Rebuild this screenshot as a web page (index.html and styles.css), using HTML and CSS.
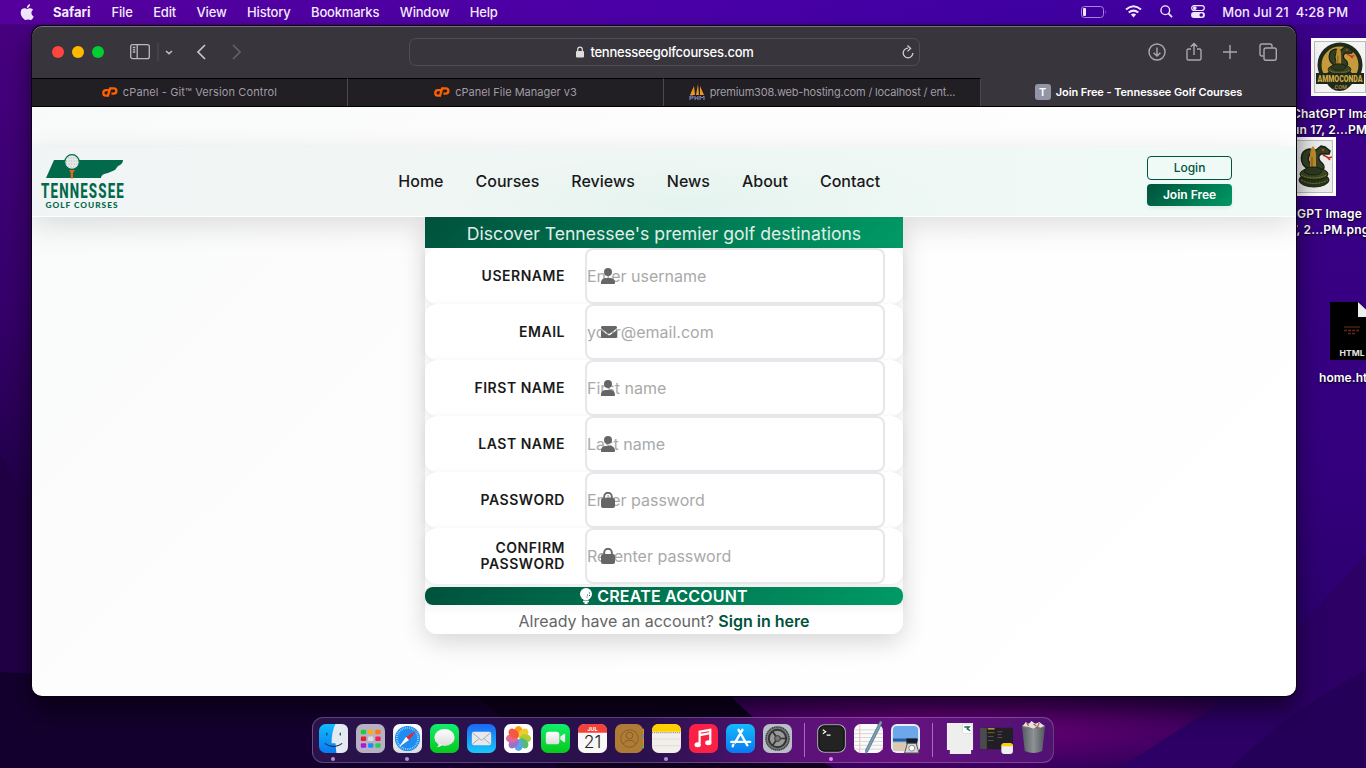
FILE: index.html
```html
<!DOCTYPE html>
<html lang="en">
<head>
<meta charset="utf-8">
<title>Join Free - Tennessee Golf Courses</title>
<link rel="stylesheet" href="styles.css">
</head>
<body>
<svg width="0" height="0" class="defs">
  <defs>
    <symbol id="user" viewBox="0 0 14 16"><circle cx="7" cy="4" r="4"/><path d="M0 16v-2a5 5 0 0 1 5-4h4a5 5 0 0 1 5 4v1q0 1-1 1z"/></symbol>
    <symbol id="mail" viewBox="0 0 16 12"><path d="M1.5 0h13A1.5 1.5 0 0 1 15.400 2.700L9 7.500q-1 .700-2 0L.600 2.700A1.500 1.500 0 0 1 1.500 0z"/><path d="M0 4l6.400 4.700q1.600 1.200 3.200 0L16 4v6.500q0 1.500-1.500 1.500h-13Q0 12 0 10.500z"/></symbol>
    <symbol id="lock" viewBox="0 0 14 16"><path d="M3.200 7V4.500a3.800 3.800 0 0 1 7.600 0V7" fill="none" stroke="currentColor" stroke-width="1.900"/><rect y="6" width="14" height="10" rx="2"/></symbol>
    <symbol id="cp" viewBox="0 0 16 11"><path d="M6.800 3.200H4a2.700 2.700 0 0 0 0 5.400h2L8.100 1.400h3.700a2.600 2.600 0 0 1 0 5.200H9.400M8 1.800L5.700 9.600" fill="none" stroke="#ff6100" stroke-width="2.300"/></symbol>
    <linearGradient id="blue" x2="0" y2="1"><stop stop-color="#1b68f5"/><stop offset="1" stop-color="#19c8fa"/></linearGradient>
    <linearGradient id="cyan" x2="0" y2="1"><stop stop-color="#12bcfb"/><stop offset="1" stop-color="#0a78f2"/></linearGradient>
    <linearGradient id="green" x2="0" y2="1"><stop stop-color="#10ee6c"/><stop offset="1" stop-color="#06c91c"/></linearGradient>
    <linearGradient id="pale" x2="0" y2="1"><stop stop-color="#fff"/><stop offset="1" stop-color="#dcdcdc"/></linearGradient>
    <linearGradient id="steel" x2="1" y2="0"><stop stop-color="#535b60"/><stop offset=".5" stop-color="#8d9295"/><stop offset="1" stop-color="#51565b"/></linearGradient>
    <symbol id="snake" viewBox="0 0 36 44"><path d="M12 25C3 20 3 7 13 5l6 1-5 4q-4 6 2 12M20 6l5-4 4 1 5 4-1 3-8 0-2 2q-1 4 3 7 5 5-2 9l-7 1 3-5q-5-5-4-10z" fill="#344021" stroke="#172113" stroke-width="1.500"/><path d="M14 27V12q0-7 3-10 3 3 3 10v15z" fill="#bd8c2c"/><path d="M16 13v14" stroke="#735417"/><path d="M27 11l6 3 3-1M31 13l3 3" fill="none" stroke="#be2a20" stroke-width="1.500"/><circle cx="27" cy="6" r="1" fill="#e34335"/><ellipse cx="18" cy="36" rx="15" ry="7" fill="#26341c" stroke="#172113"/><ellipse cx="18" cy="30" rx="14" ry="6" fill="#3c4823" stroke="#172113"/><ellipse cx="17" cy="27" rx="9" ry="4" fill="#2c391f" stroke="#172113"/><path d="M5 31q12 6 26 0M5 36q13 7 27 0" fill="none" stroke="#8d7c32" stroke-dasharray="2 1"/></symbol>
  </defs>
</svg>

<svg class="wallpaper" viewBox="0 0 1366 768" preserveAspectRatio="none">
  <defs>
    <linearGradient id="base" x2="0" y2="1"><stop stop-color="#480081"/><stop offset=".4" stop-color="#35006a"/><stop offset=".6" stop-color="#25004f"/><stop offset=".78" stop-color="#160033"/><stop offset="1" stop-color="#17002e"/></linearGradient>
    <linearGradient id="right" x2="0" y2="1"><stop stop-color="#3c008a"/><stop offset=".6" stop-color="#34007e"/><stop offset="1" stop-color="#250060"/></linearGradient>
    <radialGradient id="magenta" cx=".38" cy=".5" r=".6"><stop stop-color="#700077"/><stop offset=".6" stop-color="#4a0066"/><stop offset="1" stop-color="#2e005b"/></radialGradient>
  </defs>
  <rect width="1366" height="768" fill="url(#base)"/>
  <path d="M700 0H1366V768H1000z" fill="url(#right)"/>
  <path d="M0 455Q18 480 32 530V690L0 700z" fill="#210045"/>
  <path d="M0 672Q260 690 470 696L560 768H0z" fill="#14002e"/>
  <path d="M470 690H730Q760 725 830 768H560z" fill="#0e001e"/>
  <path d="M725 690H1200L1310 768H835Q765 735 725 690z" fill="url(#magenta)"/>
  <path d="M1240 690L1366 555V768H1120z" fill="#2c0065"/>
  <path d="M1230 768Q1290 710 1366 670V768z" fill="#250058"/>
</svg>

<header class="menubar">
  <svg class="apple" viewBox="0 0 14 16"><path d="M10 0q.200 2-1 3.100Q8 4.100 6.900 4 6.800 2.500 7.700 1.400 8.600.300 10 0zM7.200 4.900C8 4.900 8.800 4.200 10.200 4.200q1.900.100 3 1.500-1.800 1.100-1.800 3.200 0 2.400 2.300 3.500-.800 2.200-2.200 3.300c-1.100.700-2-.200-3.400-.200s-2.400.9-3.400.2C1.800 13.800.200 10.200.800 7.500c.400-2 1.800-3.200 3.400-3.200 1.300 0 2.200.600 3 .600z" fill="#efe6fb"/></svg>
  <nav class="menus"><b>Safari</b><span>File</span><span>Edit</span><span>View</span><span>History</span><span>Bookmarks</span><span>Window</span><span>Help</span></nav>
  <div class="status">
    <svg width="26" height="12" viewBox="0 0 26 12"><rect x=".5" y=".5" width="22" height="11" rx="3" fill="none" stroke="#a987d6"/><rect x="2" y="2" width="3" height="8" rx="1" fill="#f1e9fd"/><path d="M24.500 4q1.500 2 0 4" fill="#a987d6"/></svg>
    <svg width="17" height="13" viewBox="0 0 17 13" fill="none" stroke="#f1e9fd" stroke-width="2"><path d="M1 4.500Q8.500-2 16 4.500M3.700 7.600q4.800-4 9.600 0"/><path d="M5.900 9.600q2.600-2 5.200 0L8.500 12.400z" fill="#f1e9fd" stroke="none"/></svg>
    <svg width="13" height="13" viewBox="0 0 14 14" fill="none" stroke="#f1e9fd" stroke-width="1.500"><circle cx="5.700" cy="5.700" r="4.700"/><path d="M9 9l4 4" stroke-width="1.900"/></svg>
    <svg width="14" height="13" viewBox="0 0 15 14"><rect x=".7" y=".7" width="13.600" height="5.200" rx="2.600" fill="none" stroke="#f1e9fd" stroke-width="1.300"/><circle cx="4" cy="3.300" r="2" fill="#f1e9fd"/><rect y="7.500" width="15" height="6.500" rx="3.200" fill="#f1e9fd"/><circle cx="11" cy="10.700" r="1.900" fill="#4200a2"/></svg>
    <span class="clock">Mon Jul 21 &nbsp;4:28 PM</span>
  </div>
</header>

<div class="desk-file ammo"><svg width="58" height="58" viewBox="0 0 58 58"><rect width="58" height="58" fill="#fff"/><rect x="3.500" y="3.500" width="51" height="51" fill="#f4f4f3" stroke="#bbb"/><circle cx="29" cy="27" r="20.500" fill="#c79a3d" stroke="#1d2a1c" stroke-width="4"/><path d="M15 44h27q-5 9-13.500 9T15 44z" fill="#1d2a1c"/><use href="#snake" x="12" y="7" width="33" height="36"/><path d="M5 35h48v11H5z" fill="#1d2a1c"/><text x="6.500" y="44" textLength="45" lengthAdjust="spacingAndGlyphs" font-family="Roboto" font-weight="900" font-size="9.500" fill="#d3a946">AMMOCONDA</text><text x="22" y="51" font-family="Roboto" font-weight="700" font-size="5.500" fill="#a98337">.COM</text></svg></div>
<p class="desk-label one">ChatGPT Ima<br>un 17, 2...PM</p>
<div class="desk-file coil"><svg width="58" height="59" viewBox="0 0 58 59"><rect width="58" height="59" fill="#fff"/><rect x="3.500" y="3.500" width="51" height="52" fill="#ececec" stroke="#bbb"/><use href="#snake" x="18" y="7" width="36" height="44"/></svg></div>
<p class="desk-label two">GPT Image<br><span>7, 2...PM.png</span></p>
<div class="desk-file html"><svg width="44" height="58" viewBox="0 0 44 58"><path d="M0 0h29l15 15v43H0z"/><path d="M28 0v15h16z" fill="#eee"/><path d="M14 25h16" stroke="#653319"/><path d="M14 28.500h16M18 31.500h8" stroke="#65251d" stroke-width="1.500" stroke-dasharray="3 1"/><text x="9.500" y="54" textLength="25" lengthAdjust="spacingAndGlyphs" font-family="Inter" font-weight="700" font-size="7.500" fill="#e4e4e4">HTML</text></svg></div>
<p class="desk-label three">home.html</p>

<main class="window">
  <div class="toolbar">
    <div class="lights"><i class="red"></i><i class="yellow"></i><i class="lime"></i></div>
    <svg class="side" width="40" height="18" viewBox="0 0 40 18" fill="none" stroke="#bcb9bf" stroke-width="1.300"><rect x=".7" y="1.700" width="18.600" height="14" rx="2"/><path d="M7.200 2v14M2.800 4.500h2.500M2.800 6.800h2.500M2.800 9h2.500"/><path d="M28 0v18" stroke="#4d4a50"/><path d="M36 8l3 2.600L42 8" stroke-width="1.600"/></svg>
    <svg width="48" height="16" viewBox="0 0 48 16" fill="none" stroke="#c8c5ca" stroke-width="1.700" class="arrows"><path d="M9 1L2 8l7 7"/><path d="M37 1l7 7-7 7" stroke="#626066"/></svg>
    <div class="address">
      <svg width="8" height="12" viewBox="0 0 8 12"><path d="M1.700 5V3.500a2.300 2.300 0 0 1 4.600 0V5" fill="none" stroke="#ddd" stroke-width="1.200"/><rect y="5" width="8" height="6.500" rx="1" fill="#ddd"/></svg>
      <span>tennesseegolfcourses.com</span>
      <svg class="reload" width="12" height="14" viewBox="0 0 12 14" fill="none" stroke="#d2d0d4" stroke-width="1.300"><path d="M6 3.200A4.800 4.800 0 1 0 10.800 8M5.500.500L8.600 3.500 5.500 6.400"/></svg>
    </div>
    <div class="tools">
      <svg width="18" height="18" viewBox="0 0 18 18"><circle cx="9" cy="9" r="8"/><path d="M9 4.500v8.500M5.600 9.700L9 13l3.400-3.300"/></svg>
      <svg width="16" height="20" viewBox="0 0 16 20"><path d="M5 7H2.500Q1 7 1 8.500v8Q1 18 2.500 18h11q1.500 0 1.500-1.500v-8Q15 7 13.500 7H11M8 13V1.500M4.700 4.700L8 1.400l3.300 3.300"/></svg>
      <svg width="14" height="14" viewBox="0 0 14 14"><path d="M7 0v14M0 7h14"/></svg>
      <svg width="18" height="18" viewBox="0 0 18 18"><rect x="5" y="5" width="12.300" height="12.300" rx="2"/><path d="M4.500 13H3q-2 0-2-2V3q0-2 2-2h8q2 0 2 2v1.500"/></svg>
    </div>
  </div>
  <div class="tabs">
    <div class="tab"><svg width="16" height="11"><use href="#cp"/></svg><span class="t1">cPanel - Git™ Version Control</span></div>
    <div class="tab"><svg width="16" height="11"><use href="#cp"/></svg><span class="t2">cPanel File Manager v3</span></div>
    <div class="tab"><svg width="16" height="16" viewBox="0 0 16 16"><path d="M1 11L5 2l1 9zM7 11L9 0l1 11zM11 11V2l4 9z" fill="#ee9620"/><path d="M1 16v-4h3v2H1m5 2v-4m0 2h3m0-2v4m2 0v-4l2 2 2-2v4" fill="none" stroke="#8890c8"/></svg><span class="t3">premium308.web-hosting.com / localhost / ent...</span></div>
    <div class="tab active"><em>T</em><span class="t4">Join Free - Tennessee Golf Courses</span></div>
  </div>
  <div class="page">
    <div class="site-header">
      <svg class="logo" width="84" height="58" viewBox="0 0 84 58"><path d="M13 7h69q0 4-5 6l-3 4-7 3q-7 1-7 5H5z" fill="#02694b"/><path d="M25.500 17h6l-2 3v5.500h-2.300V20z" transform="translate(2.500 0)" fill="#e9651d"/><circle cx="31" cy="9" r="7.300" fill="#e5e9e7" stroke="#02694b" stroke-width="1.200"/><path d="M27 5h9M25 8h12M25 11h12M27 14h8" stroke="#aab2ae" stroke-width="1.100" stroke-dasharray="1 1.600"/><text x="0" y="44.700" textLength="84" lengthAdjust="spacingAndGlyphs" font-family="Roboto" font-weight="800" font-size="20" letter-spacing="1.800" fill="#02694b">TENNESSEE</text><text x="4.500" y="54.500" textLength="72" font-family="Lato" font-weight="900" font-size="8.300" fill="#02694b">GOLF COURSES</text></svg>
      <nav class="links"><a>Home</a><a>Courses</a><a>Reviews</a><a>News</a><a>About</a><a>Contact</a></nav>
      <div class="auth"><a class="login">Login</a><a class="join">Join Free</a></div>
    </div>
    <section class="card">
      <h1>Discover Tennessee's premier golf destinations</h1>
      <div class="row"><label>USERNAME</label><div class="field"><span>Enter username</span><svg class="icon" width="14" height="16"><use href="#user"/></svg></div></div>
      <div class="row"><label>EMAIL</label><div class="field"><span>your@email.com</span><svg class="icon" width="16" height="12"><use href="#mail"/></svg></div></div>
      <div class="row"><label>FIRST NAME</label><div class="field"><span>First name</span><svg class="icon" width="14" height="16"><use href="#user"/></svg></div></div>
      <div class="row"><label>LAST NAME</label><div class="field"><span>Last name</span><svg class="icon" width="14" height="16"><use href="#user"/></svg></div></div>
      <div class="row"><label>PASSWORD</label><div class="field"><span>Enter password</span><svg class="icon" width="14" height="16"><use href="#lock"/></svg></div></div>
      <div class="row"><label>CONFIRM<br>PASSWORD</label><div class="field"><span>Re-enter password</span><svg class="icon" width="14" height="16"><use href="#lock"/></svg></div></div>
      <div class="create"><svg width="12" height="16" viewBox="0 0 12 16" fill="#fff"><circle cx="6" cy="6" r="6"/><path d="M3.500 10.500h5v2h-5zM3 13h6v1.200H7.500V16h-3v-1.800H3z"/><path d="M7 7h1M9 5h1M6.500 9h1M9 7.500h1" stroke="#056b4c"/></svg><b>CREATE ACCOUNT</b></div>
      <p class="signin">Already have an account? <b>Sign in here</b></p>
    </section>
  </div>
</main>

<footer class="dock">
  <div class="app run"><svg viewBox="0 0 30 30"><rect width="30" height="30" rx="7" fill="url(#cyan)"/><path d="M17 0h6q7 0 7 7v16q0 7-7 7h-5l-1-10h-4Q13 8 17 0z" fill="#e5eaf2"/><path d="M8 9v3M22 9v3M6 20q9 7 18 0" fill="none" stroke="#173451" stroke-width="1.200"/></svg></div>
  <div class="app"><svg viewBox="0 0 30 30"><rect width="30" height="30" rx="7" fill="#b8b1c3"/><g><rect x="5" y="6" width="5.500" height="4.500" rx="1" fill="#24cc36"/><rect x="12.500" y="6" width="5.500" height="4.500" rx="1" fill="#ffab13"/><rect x="20" y="6" width="5.500" height="4.500" rx="1" fill="#ff7818"/><rect x="5" y="13" width="5.500" height="4.500" rx="1" fill="#e51d2c"/><rect x="12.500" y="13" width="5.500" height="4.500" rx="1" fill="#ddd"/><rect x="20" y="13" width="5.500" height="4.500" rx="1" fill="#f21c65"/><rect x="5" y="20" width="5.500" height="4.500" rx="1" fill="#a51be1"/><rect x="12.500" y="20" width="5.500" height="4.500" rx="1" fill="#1890f5"/><rect x="20" y="20" width="5.500" height="4.500" rx="1" fill="#26cf53"/></g></svg></div>
  <div class="app run"><svg viewBox="0 0 30 30"><rect width="30" height="30" rx="7" fill="url(#pale)"/><circle cx="15" cy="15" r="13" fill="#1f8df0"/><circle cx="15" cy="15" r="11" fill="none" stroke="#c4e8ff" stroke-width="2" stroke-dasharray=".6 1.300"/><path d="M24 7L13.500 13.500l3 3z" fill="#f1222c"/><path d="M6 24l7.500-10.500 3 3z" fill="#fff"/></svg></div>
  <div class="app"><svg viewBox="0 0 30 30"><rect width="30" height="30" rx="7" fill="url(#green)"/><ellipse cx="15" cy="14" rx="10.500" ry="8.700" fill="url(#pale)"/><path d="M9 20q0 3-2 4 4 0 6-3z" fill="#eee"/></svg></div>
  <div class="app"><svg viewBox="0 0 30 30"><rect width="30" height="30" rx="7" fill="url(#blue)"/><rect x="5" y="8" width="20" height="14" rx="2" fill="#e7e8ec"/><path d="M5.500 9l9.500 8 9.500-8M5.500 21l7-6M24.500 21l-7-6" fill="none" stroke="#aaa"/></svg></div>
  <div class="app"><svg viewBox="0 0 30 30"><rect width="30" height="30" rx="7" fill="#fff"/><g opacity=".92"><ellipse cx="15" cy="8" rx="4.500" ry="6" fill="#ff9200"/><ellipse cx="15" cy="8" rx="4.500" ry="6" fill="#efc620" transform="rotate(45 15 15)"/><ellipse cx="15" cy="8" rx="4.500" ry="6" fill="#a8c820" transform="rotate(90 15 15)"/><ellipse cx="15" cy="8" rx="4.500" ry="6" fill="#45b56c" transform="rotate(135 15 15)"/><ellipse cx="15" cy="8" rx="4.500" ry="6" fill="#4a9fe5" transform="rotate(180 15 15)"/><ellipse cx="15" cy="8" rx="4.500" ry="6" fill="#8c69c8" transform="rotate(225 15 15)"/><ellipse cx="15" cy="8" rx="4.500" ry="6" fill="#e25a90" transform="rotate(270 15 15)"/><ellipse cx="15" cy="8" rx="4.500" ry="6" fill="#f34a31" transform="rotate(315 15 15)"/></g></svg></div>
  <div class="app"><svg viewBox="0 0 30 30"><rect width="30" height="30" rx="7" fill="url(#green)"/><rect x="5" y="8" width="14" height="13" rx="3" fill="url(#pale)"/><path d="M20 13l4-3q1 0 1 1v7q0 1-1 1l-4-3z" fill="#eee"/></svg></div>
  <div class="app"><svg viewBox="0 0 30 30"><rect width="30" height="30" rx="7" fill="#f8f8f8"/><path d="M0 9V7q0-7 7-7h16q7 0 7 7v2z" fill="#f34339"/><text x="15" y="7.300" text-anchor="middle" font-family="Inter" font-weight="700" font-size="5.500" fill="#fff">JUL</text><text x="15" y="25" text-anchor="middle" font-family="Inter" font-size="18" font-weight="300" fill="#222">21</text></svg></div>
  <div class="app"><svg viewBox="0 0 30 30"><path d="M27 5h3v20h-3z" fill="#e48d22"/><path d="M28 10h2v5h-2z" fill="#26aad8"/><path d="M28 20h2v5h-2z" fill="#45c84c"/><rect width="29" height="30" rx="7" fill="#ae7c37"/><g fill="none" stroke="#875d25"><circle cx="15" cy="15" r="9"/><circle cx="15" cy="12" r="3.500"/><path d="M9 21q0-4 6-4t6 4"/></g></svg></div>
  <div class="app run"><svg viewBox="0 0 30 30"><rect width="30" height="30" rx="7" fill="#f2efea"/><path d="M0 8V7q0-7 7-7h16q7 0 7 7v1z" fill="#ffd000"/><path d="M0 9h30" stroke="#777" stroke-dasharray="1"/><path d="M0 15.500h30M0 22.500h30" stroke="#ddd"/></svg></div>
  <div class="app"><svg viewBox="0 0 30 30"><rect width="30" height="30" rx="7" fill="#fa2145"/><path d="M11 20V8l11-2v13M11 11.500l11-2" fill="none" stroke="#fff" stroke-width="2.300"/><ellipse cx="9" cy="21.500" rx="3.300" ry="2.600" fill="#fff"/><ellipse cx="20" cy="19.500" rx="3.300" ry="2.600" fill="#fff"/></svg></div>
  <div class="app"><svg viewBox="0 0 30 30"><rect width="30" height="30" rx="7" fill="url(#cyan)"/><path d="M13 6l9 16M17 6L9.500 19M5.500 18.500H18M22 18.500h3M7.500 21.500L7 23" fill="none" stroke="#fff" stroke-width="2.500" stroke-linecap="round"/></svg></div>
  <div class="app"><svg viewBox="0 0 30 30"><rect width="30" height="30" rx="7" fill="#b9bec6"/><circle cx="15" cy="15" r="12" fill="#77797c" stroke="#3b3d40" stroke-width="1.500" stroke-dasharray="1.500 .5"/><circle cx="15" cy="15" r="9" fill="#999" stroke="#333" stroke-width="2"/><path d="M15 15L10 8M15 15h9M15 15l-5 7" stroke="#333" stroke-width="1.800"/><circle cx="15" cy="15" r="3" fill="#777" stroke="#333"/></svg></div>
  <i class="sep"></i>
  <div class="app run pink"><svg viewBox="0 0 30 30"><rect x=".8" y=".8" width="28.400" height="28.400" rx="7" fill="#232323" stroke="#a3a9aa" stroke-width="1.300"/><rect x="2" y="2" width="26" height="26" rx="5.500" fill="none" stroke="#080808"/><path d="M6 6l3 2-3 2M10 11.500h4" fill="none" stroke="#fff" stroke-width="1.200"/></svg></div>
  <div class="app"><svg viewBox="0 0 30 30"><rect width="30" height="30" rx="7" fill="#fafafa"/><path d="M0 6h30M0 10h30M0 14h30M0 18h30M0 22h30M0 26h30" stroke="#d4d4d4"/><path d="M6 0v30" stroke="#edb7bc"/><path d="M27-3q3 0 1.500 3L14 29l-2 2V27z" fill="#75a1ba" stroke="#4b6071" stroke-width=".7"/></svg></div>
  <div class="app"><svg viewBox="0 0 30 30"><rect width="30" height="30" rx="6" fill="#e8edf2"/><rect x="2" y="2" width="26" height="26" rx="4" fill="#6ca7e9"/><path d="M2 15h26v3H2z" fill="#245e9b"/><path d="M2 19h26v5q0 4-4 4H6q-4 0-4-4z" fill="#ddc9b2"/><path d="M16 15h11v6H16z" fill="#171b1f"/><path d="M17 20h9l3 10H14z" fill="#d4d5d7" stroke="#555"/><circle cx="21.500" cy="25" r="3" fill="#fff" stroke="#888"/></svg></div>
  <i class="sep"></i>
  <div class="app"><svg viewBox="0 0 30 30"><path d="M2-1h27v28h-2v4H5v-4H2z" fill="#eee"/><path d="M18 0h10v10h-8q-2 0-2-2z" fill="#fff" stroke="#ddd"/><path d="M20 3h5l-2 2 3 2" stroke="#176b53" stroke-width="1.500" fill="none"/></svg></div>
  <div class="app wide"><svg viewBox="0 0 34 30"><path d="M0 4h34v22H0z" fill="#211f23"/><path d="M0 4h7v22H0z" fill="#4b4a4e"/><path d="M8 5h7" stroke="#c1a426" stroke-width="1.500"/><path d="M8 9h7" stroke="#77682a"/><path d="M8 13h6M8 17h6M18 8h5M18 11h4M18 14h5" stroke="#575559"/><rect x="22" y="20" width="12" height="11" rx="3" fill="#eee"/><path d="M22 23q0-3 3-3h6q3 0 3 3z" fill="#ffd000"/></svg></div>
  <div class="app"><svg viewBox="0 0 30 30"><path d="M3 2h24l-3 26q-9 4-18 0z" fill="url(#steel)"/><ellipse cx="15" cy="2" rx="12" ry="3" fill="#777"/><path d="M4 2l3-4 3 2 3-3 4 3 4-2 5 4-4 2-3-2-4 3-5-2z" fill="#e6e1e0"/><path d="M8-1l2 3M15 0l3 2M21-1l-2 4" stroke="#b65643" stroke-width="1.200"/></svg></div>
</footer>
</body>
</html>
```
FILE: styles.css
```css
* { box-sizing: border-box; }
body { margin: 0; width: 1366px; height: 768px; overflow: hidden; position: relative; font-family: Inter, "Liberation Sans", sans-serif; }
.defs { position: absolute; }
.wallpaper { position: absolute; inset: 0; width: 1366px; height: 768px; }
p, h1 { margin: 0; }
svg { display: block; flex: none; overflow: visible; }

.menubar { position: relative; height: 24px; padding: 0 18px 1px 20px; display: flex; align-items: center; color: #f3ecfd; font-size: 13px; font-weight: 500; background: linear-gradient(90deg, #55009c, #4b00a7 45%, #4000a2 75%, #43009b); }
.apple { width: 14px; height: 16px; margin-right: 19px; }
.menus { display: flex; gap: 20.6px; letter-spacing: -.2px; }
.menus b { font-weight: 700; margin-right: .5px; letter-spacing: 0; }
.status { margin-left: auto; display: flex; align-items: center; gap: 18px; }
.clock { margin-left: -1px; white-space: nowrap; letter-spacing: 0; }

.desk-file { position: absolute; }
.ammo { left: 1311px; top: 38px; }
.coil { left: 1278px; top: 137px; }
.html { left: 1330px; top: 302px; }
.desk-label { position: absolute; white-space: nowrap; color: #fff; font-size: 12px; font-weight: 600; line-height: 16px; letter-spacing: .2px; text-shadow: 0 1px 2px #000; }
.one { left: 1292px; top: 106px; }
.two { left: 1297px; top: 206px; }
.two span { margin-left: -6px; }
.three { left: 1319px; top: 370px; letter-spacing: .05px; }

.window { position: absolute; left: 32px; top: 26px; width: 1264px; height: 670px; border-radius: 10px; overflow: hidden; background: #39353c; box-shadow: 0 0 0 1px #080010, 0 14px 26px rgba(0,0,0,.55); }
.toolbar { height: 52px; display: flex; align-items: center; padding: 0 19.5px 0 20px; box-shadow: inset 0 1px #77737a; border-radius: 10px 10px 0 0; }
.lights { display: flex; gap: 8px; }
.lights i { width: 12px; height: 12px; border-radius: 50%; }
.red { background: #ff453e; }
.yellow { background: #ffb900; }
.lime { background: #00ce31; }
.side { margin-left: 26px; }
.arrows { margin-left: 26px; }
.address { margin-left: 165px; width: 511px; height: 28px; border: 1px solid #504d54; border-radius: 7px; display: flex; align-items: center; justify-content: center; gap: 6px; position: relative; color: #fff; font-size: 13px; font-weight: 500; letter-spacing: -.24px; padding-left: 1px; }
.reload { position: absolute; right: 5px; }
.tools { margin-left: auto; display: flex; gap: 20px; align-items: center; fill: none; stroke: #aaa7ad; stroke-width: 1.4px; }
.tools svg:nth-child(3) { margin-left: 1.5px; margin-right: 1.5px; }

.tabs { height: 29px; display: grid; grid-template-columns: 316px 316px 317px 1fr; border-bottom: 1px solid #000; }
.tab { display: flex; align-items: center; justify-content: center; gap: 5px; padding-bottom: 1px; background: #211e24; border-top: 1px solid #000; border-right: 1px solid #4b484e; color: #a09da3; font-size: 11px; white-space: nowrap; }
.t1 { letter-spacing: .12px; }
.t3 { letter-spacing: -.17px; }
.t4 { letter-spacing: -.09px; }
.tab.active { background: #39353c; color: #fff; border: 0; font-weight: 600; padding-bottom: 1px; }
.tab em { width: 16px; height: 16px; border-radius: 3px; background: #9295a6; color: #fff; font-style: normal; font-size: 11px; font-weight: 600; text-align: center; line-height: 17px; }

.page { height: 589px; padding-top: 40px; background: linear-gradient(135deg, #f8faf9 0, #fdfdfd 35%, #fff); display: flex; flex-direction: column; align-items: center; }
.site-header { width: 100%; height: 70px; flex: none; display: flex; align-items: center; padding: 0 64px 2px 9px; background: radial-gradient(ellipse 280px 60px at 52% 85%, rgba(218,240,232,.5), transparent), linear-gradient(90deg, #f1f4f4, #effaf6); border-bottom: 1px solid #fff; box-shadow: 0 8px 30px rgba(0,0,0,.13); }
.logo { margin-top: 3px; }
.links { display: flex; gap: 32px; margin-left: 273.300px; font-size: 16px; font-weight: 500; color: #1a1a1a; }
.auth { margin-left: auto; width: 85px; display: flex; flex-direction: column; gap: 4px; text-align: center; font-size: 12px; }
.login { height: 24px; line-height: 22px; border: 1px solid #005440; border-radius: 4px; color: #005440; font-weight: 500; }
.join { height: 22px; line-height: 22px; border-radius: 4px; color: #fff; font-weight: 600; background: linear-gradient(135deg, #00523c, #009865); box-shadow: 0 2px 4px #0001; }

.card { width: 478px; height: 417px; background: #fbfbfb; border-radius: 0 0 12px 12px; box-shadow: 0 8px 26px rgba(0,0,0,.16); clip-path: inset(0 -50px -60px -50px); color: #1a1a1a; }
.card h1 { height: 31px; background: linear-gradient(135deg, #00513c, #009b66); color: #e0eee9; font-weight: 400; font-size: 17.6px; line-height: 33px; text-align: center; }
.row { height: 56px; display: flex; align-items: center; background: #fff; border-radius: 12px; box-shadow: 0 2px 8px rgba(0,0,0,.07); }
.row label { width: 140px; text-align: right; font-size: 14px; line-height: 16px; font-weight: 600; letter-spacing: .52px; }
.field { position: relative; width: 300px; height: 56px; margin-left: 20px; border: 2px solid #e5e7eb; border-radius: 8px; display: flex; align-items: center; color: #a9a9a9; font-size: 16px; }
.icon { position: absolute; left: 14px; top: 50%; transform: translateY(-50%); color: #666; fill: #666; }
.create { height: 18px; margin-top: 3px; border-radius: 8px; background: linear-gradient(135deg, #00513c, #009b66); color: #fff; display: flex; align-items: center; justify-content: center; gap: 5px; font-size: 16px; box-shadow: 0 4px 10px #0001; }
.create b { font-weight: 600; letter-spacing: .2px; }
.signin { height: 29px; border-radius: 0 0 12px 12px; line-height: 33px; text-align: center; font-size: 16px; color: #666; background: linear-gradient(#f7f7f7, #fff 10px); }
.signin b { color: #00523c; font-weight: 600; }

.dock { position: absolute; left: 312px; top: 717px; width: 742px; height: 46px; display: flex; align-items: center; justify-content: center; border: 1px solid #ffffff38; border-radius: 11px; background: linear-gradient(90deg, #2a124b, #2a114d 45%, #5b1277 65%, #65127f 80%, #501273); }
.app { width: 37px; height: 44px; display: flex; justify-content: center; padding-top: 6px; position: relative; flex: none; }
.app svg { width: 29px; height: 29px; }
.app.wide svg { width: 33px; }
.run::after { content: ""; position: absolute; width: 4px; height: 4px; border-radius: 50%; background: #b093cf; left: 16px; top: 39px; }
.pink::after { background: #e48cff; }
.sep { width: 17px; height: 34px; background: linear-gradient(#a76bc0, #a76bc0) center / 1px 100% no-repeat; flex: none; }
```
